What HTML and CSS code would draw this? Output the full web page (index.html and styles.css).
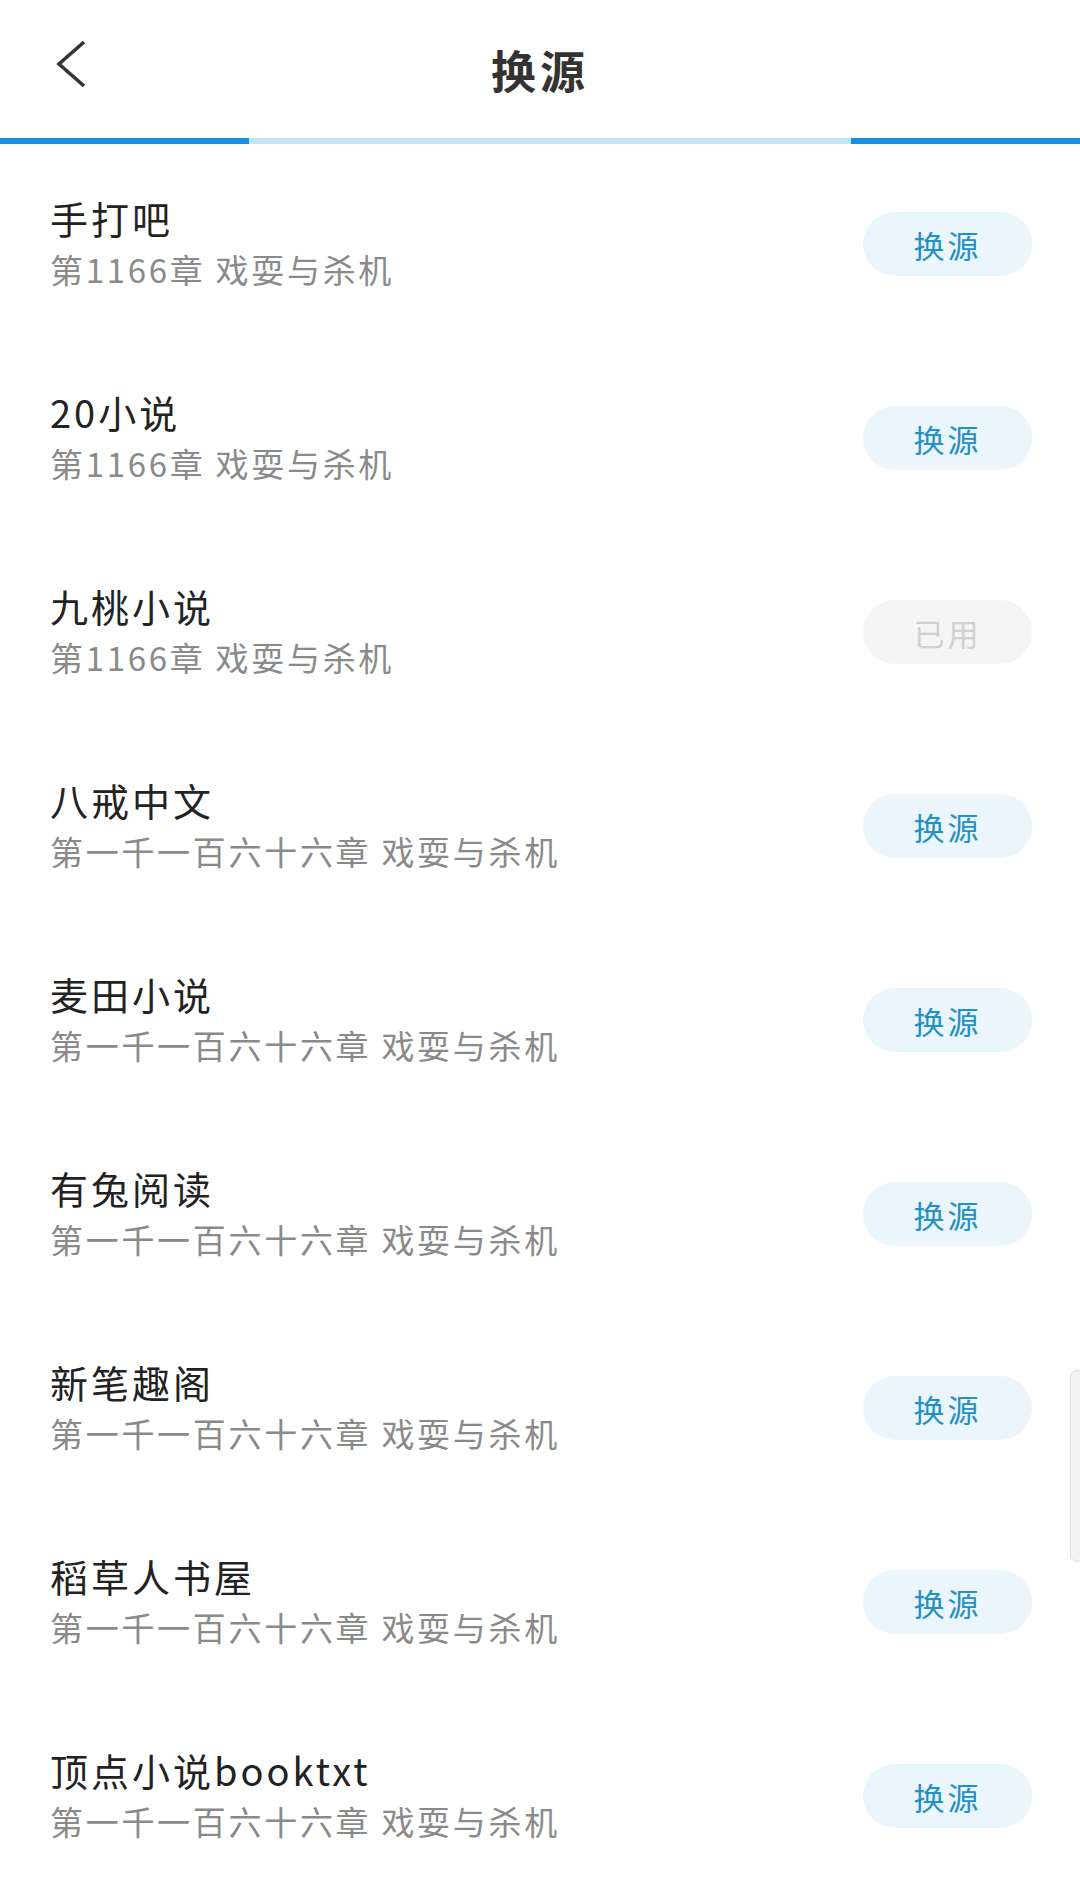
FILE: index.html
```html
<!DOCTYPE html>
<html lang="zh-CN">
<head>
    <meta charset="UTF-8">
    <meta name="viewport" content="width=device-width, initial-scale=1.0">
    <title>换源</title>
    <link rel="stylesheet" href="styles.css">
</head>
<body>
<div class="page">
    <header class="topbar">
        <a class="back" href="#">
            <svg width="34" height="50" viewBox="0 0 34 50">
                <path d="M30 3 L5 25 L30 47" fill="none" stroke="#333" stroke-width="3.5" stroke-linejoin="miter"/>
            </svg>
        </a>
        <h1>换源</h1>
        <span></span>
    </header>
    <div class="progress">
        <span class="seg seg-done"></span>
        <span class="seg seg-mid"></span>
        <span class="seg seg-end"></span>
    </div>
    <ul class="source-list">
        <li class="source-item">
            <div class="source-info">
                <div class="source-name">手打吧</div>
                <div class="source-chapter">第1166章 戏耍与杀机</div>
            </div>
            <button class="switch-btn">换源</button>
        </li>
        <li class="source-item">
            <div class="source-info">
                <div class="source-name">20小说</div>
                <div class="source-chapter">第1166章 戏耍与杀机</div>
            </div>
            <button class="switch-btn">换源</button>
        </li>
        <li class="source-item">
            <div class="source-info">
                <div class="source-name">九桃小说</div>
                <div class="source-chapter">第1166章 戏耍与杀机</div>
            </div>
            <button class="switch-btn used">已用</button>
        </li>
        <li class="source-item">
            <div class="source-info">
                <div class="source-name">八戒中文</div>
                <div class="source-chapter">第一千一百六十六章 戏耍与杀机</div>
            </div>
            <button class="switch-btn">换源</button>
        </li>
        <li class="source-item">
            <div class="source-info">
                <div class="source-name">麦田小说</div>
                <div class="source-chapter">第一千一百六十六章 戏耍与杀机</div>
            </div>
            <button class="switch-btn">换源</button>
        </li>
        <li class="source-item">
            <div class="source-info">
                <div class="source-name">有兔阅读</div>
                <div class="source-chapter">第一千一百六十六章 戏耍与杀机</div>
            </div>
            <button class="switch-btn">换源</button>
        </li>
        <li class="source-item">
            <div class="source-info">
                <div class="source-name">新笔趣阁</div>
                <div class="source-chapter">第一千一百六十六章 戏耍与杀机</div>
            </div>
            <button class="switch-btn">换源</button>
        </li>
        <li class="source-item">
            <div class="source-info">
                <div class="source-name">稻草人书屋</div>
                <div class="source-chapter">第一千一百六十六章 戏耍与杀机</div>
            </div>
            <button class="switch-btn">换源</button>
        </li>
        <li class="source-item">
            <div class="source-info">
                <div class="source-name">顶点小说booktxt</div>
                <div class="source-chapter">第一千一百六十六章 戏耍与杀机</div>
            </div>
            <button class="switch-btn">换源</button>
        </li>
    </ul>
    <div class="scrollbar"></div>
</div>
</body>
</html>
```

FILE: styles.css
```css
body {
    margin: 0;
    padding: 0;
    background-color: #fff;
    font-family: "Noto Sans CJK SC", "Noto Sans", sans-serif;
    overflow: hidden;
}

.page {
    position: relative;
    width: 1080px;
    height: 1888px;
    overflow: hidden;
}

.topbar {
    height: 138px;
    display: grid;
    grid-template-columns: 1fr auto 1fr;
    align-items: center;
    padding-left: 54px;
}

.back {
    display: flex;
    margin-top: -10px;
}

.topbar h1 {
    margin: 0;
    font-size: 45px;
    font-weight: 700;
    color: #333;
    letter-spacing: 4px;
    padding-right: 54px;
}

.progress {
    display: flex;
    height: 6px;
}

.seg-done {
    width: 249px;
    background-color: #1a8fe4;
}

.seg-mid {
    flex: 1;
    background-color: #c0e4f4;
}

.seg-end {
    width: 229px;
    background-color: #1a8fe4;
}

.source-list {
    list-style: none;
    margin: 0;
    padding: 0;
}

.source-item {
    box-sizing: border-box;
    height: 194px;
    padding: 6px 48px 0 50px;
    display: flex;
    align-items: center;
    justify-content: space-between;
}

.source-name {
    font-size: 38px;
    line-height: 50px;
    letter-spacing: 3px;
    color: #222;
}

.source-chapter {
    font-size: 33px;
    line-height: 52px;
    letter-spacing: 2.7px;
    color: #8a8a8a;
}

.switch-btn {
    width: 169px;
    height: 64px;
    border: none;
    border-radius: 32px;
    background-color: #eaf5fc;
    color: #2590c4;
    font-family: "Noto Sans CJK SC", sans-serif;
    font-size: 31px;
    letter-spacing: 3px;
    cursor: pointer;
}

.switch-btn.used {
    background-color: #f5f5f5;
    color: #d0d0d0;
}

.scrollbar {
    position: absolute;
    right: -4px;
    top: 1370px;
    width: 12px;
    height: 190px;
    border: 1px solid #dcdcdc;
    border-radius: 7px;
    background-color: #f3f3f3;
}
```
